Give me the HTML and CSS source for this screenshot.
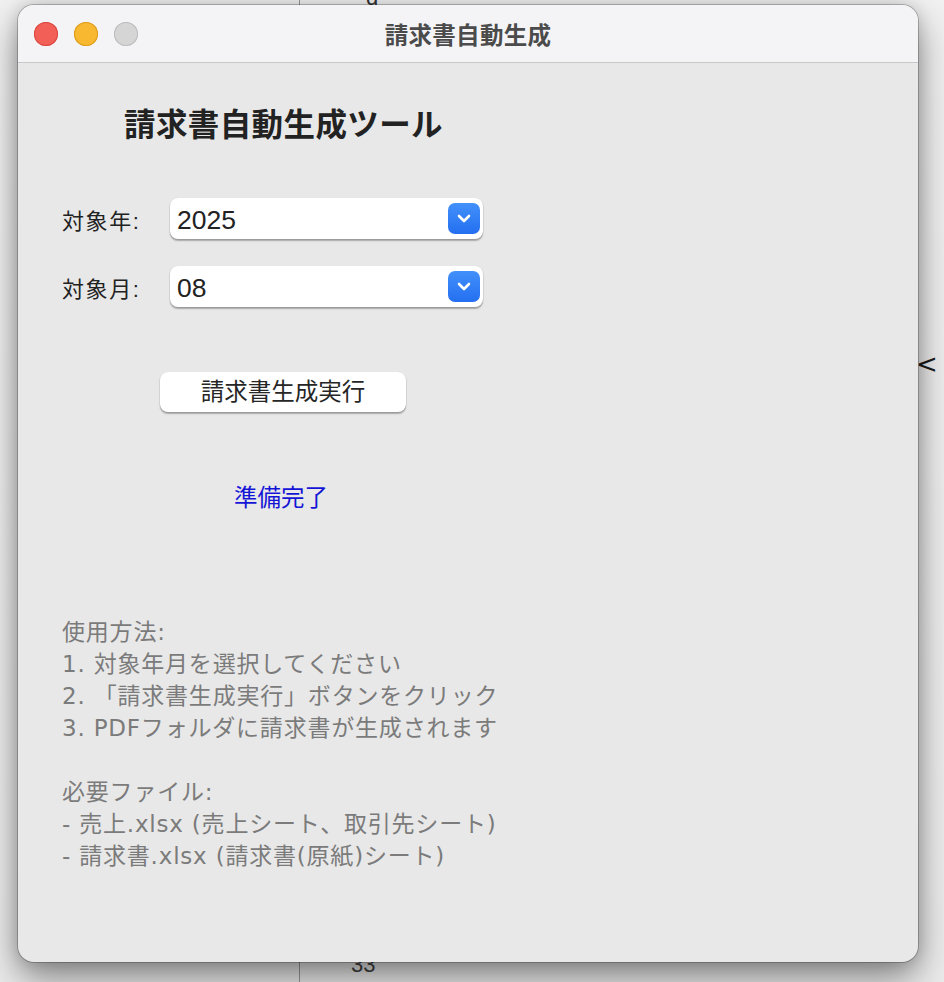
FILE: index.html
```html
<!DOCTYPE html>
<html lang="ja">
<head>
<meta charset="utf-8">
<title>請求書自動生成</title>
<link rel="stylesheet" href="styles.css">
</head>
<body>
<div class="desktop">
  <div class="bg-divider"></div>
  <span class="bg-glyph bg-d">d</span>
  <span class="bg-glyph bg-lt">&lt;</span>
  <span class="bg-glyph bg-33">33</span>

  <div class="window">
    <div class="titlebar">
      <div class="lights">
        <span class="light red"></span>
        <span class="light yellow"></span>
        <span class="light gray"></span>
      </div>
      <div class="title">請求書自動生成</div>
    </div>
    <div class="content">
      <h1 class="heading">請求書自動生成ツール</h1>

      <div class="form-row row-year">
        <label class="label">対象年:</label>
        <div class="select">
          <span class="select-value">2025</span>
          <span class="select-btn">
            <svg width="14" height="9" viewBox="0 0 14 9"><path d="M2 2 L7 7 L12 2" fill="none" stroke="#fff" stroke-width="2.6" stroke-linecap="round" stroke-linejoin="round"/></svg>
          </span>
        </div>
      </div>

      <div class="form-row row-month">
        <label class="label">対象月:</label>
        <div class="select">
          <span class="select-value">08</span>
          <span class="select-btn">
            <svg width="14" height="9" viewBox="0 0 14 9"><path d="M2 2 L7 7 L12 2" fill="none" stroke="#fff" stroke-width="2.6" stroke-linecap="round" stroke-linejoin="round"/></svg>
          </span>
        </div>
      </div>

      <button class="run-btn">請求書生成実行</button>

      <div class="status">準備完了</div>

      <div class="help">
        <p>使用方法:</p>
        <p>1. 対象年月を選択してください</p>
        <p>2. 「請求書生成実行」ボタンをクリック</p>
        <p>3. PDFフォルダに請求書が生成されます</p>
        <p class="blank">&nbsp;</p>
        <p>必要ファイル:</p>
        <p>- 売上.xlsx (売上シート、取引先シート)</p>
        <p>- 請求書.xlsx (請求書(原紙)シート)</p>
      </div>
    </div>
  </div>
</div>
</body>
</html>
```
FILE: styles.css
```css
* { box-sizing: border-box; }
html, body {
  margin: 0;
  padding: 0;
}
body {
  width: 944px;
  height: 982px;
  overflow: hidden;
  background: #efefef;
  font-family: "Liberation Sans", "Noto Sans CJK JP", sans-serif;
}
.desktop {
  position: relative;
  width: 944px;
  height: 982px;
  background: linear-gradient(#f1f1f1, #ececec);
}
.bg-divider {
  position: absolute;
  left: 299px;
  top: 0;
  width: 1px;
  height: 982px;
  background: #9a9a9a;
}
.bg-glyph {
  position: absolute;
  color: #333;
  font-size: 22px;
  line-height: 22px;
}
.bg-d { left: 366px; top: -13px; }
.bg-lt { left: 916px; top: 350px; color: #1a1a1a; font-size: 26px; line-height: 28px; font-family: "DejaVu Sans", sans-serif; }
.bg-33 { left: 351px; top: 954px; color: #444; }

.window {
  position: absolute;
  left: 18px;
  top: 5px;
  width: 900px;
  height: 957px;
  border-radius: 16px;
  background: #e8e8e8;
  overflow: hidden;
  box-shadow: 0 0 0 1px rgba(0,0,0,0.22), 0 16px 36px rgba(0,0,0,0.45), 0 0 16px rgba(0,0,0,0.14);
}
.titlebar {
  position: relative;
  height: 58px;
  background: #f4f4f6;
  border-bottom: 1px solid #c8c8c8;
  display: flex;
  align-items: center;
  justify-content: center;
}
.lights {
  position: absolute;
  left: 16px;
  top: 17px;
  display: flex;
  gap: 16px;
}
.light {
  width: 24px;
  height: 24px;
  border-radius: 50%;
}
.red { background: #f15f56; box-shadow: inset 0 0 0 1px #d9483f; }
.yellow { background: #f8b830; box-shadow: inset 0 0 0 1px #dc9c1d; }
.gray { background: #d5d5d5; box-shadow: inset 0 0 0 1px #bcbcbc; }
.title {
  font-size: 23.5px;
  font-weight: bold;
  color: #4b4b4b;
  letter-spacing: 0.3px;
}

.content {
  padding: 42px 0 0 44px;
}
.heading {
  margin: 0 0 0 62px;
  font-size: 31.5px;
  line-height: 40px;
  font-weight: bold;
  color: #222;
  letter-spacing: 0.4px;
}
.form-row {
  display: flex;
  align-items: center;
}
.row-year { margin-top: 53px; }
.row-month { margin-top: 27px; }
.label {
  width: 108px;
  font-size: 22px;
  color: #222;
  letter-spacing: 1.6px;
}
.select {
  width: 313px;
  height: 41px;
  background: #fff;
  border-radius: 8px;
  box-shadow: 0 0.5px 0 0.5px rgba(0,0,0,0.08), 0 1.5px 1.5px rgba(0,0,0,0.28);
  display: flex;
  align-items: center;
  justify-content: space-between;
  padding: 0 3px 0 7px;
}
.select-value {
  font-size: 26.5px;
  color: #222;
  padding-top: 4px;
}
.select-btn {
  width: 32px;
  height: 31px;
  border-radius: 7px;
  background: linear-gradient(#4290fb, #246ff0);
  display: flex;
  align-items: center;
  justify-content: center;
}
.run-btn {
  display: block;
  margin: 65px 0 0 98px;
  width: 246px;
  height: 40px;
  border: none;
  border-radius: 8px;
  background: #fff;
  box-shadow: 0 0.5px 0 0.5px rgba(0,0,0,0.08), 0 1.5px 1.5px rgba(0,0,0,0.28);
  font-family: "Liberation Sans", "Noto Sans CJK JP", sans-serif;
  font-size: 23.5px;
  color: #262626;
  padding: 0 0 4px 0;
}
.status {
  margin: 71px 0 0 96px;
  width: 246px;
  text-align: center;
  font-size: 23.5px;
  line-height: 30px;
  color: #1414d6;
}
.help {
  margin-top: 103px;
  color: #7b7b7b;
  font-family: "DejaVu Sans", "Noto Sans CJK JP", sans-serif;
  font-size: 23px;
  line-height: 32px;
  letter-spacing: 0.8px;
}
.help p {
  margin: 0;
}
```
